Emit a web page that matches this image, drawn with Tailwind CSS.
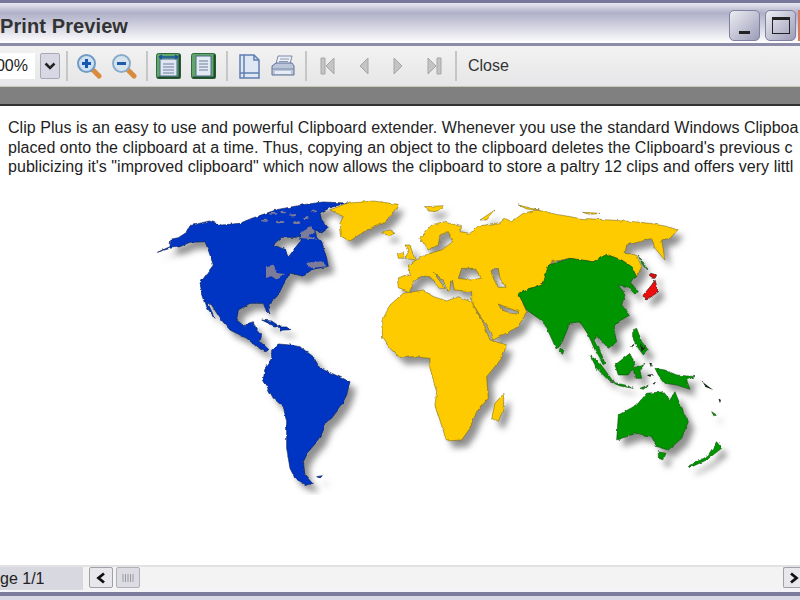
<!DOCTYPE html>
<html lang="en">

<head>
  <meta charset="UTF-8">
  <title>Print Preview</title>
  <script src="https://cdn.jsdelivr.net/npm/@tailwindcss/browser@4"></script>
</head>

<body class="w-[800px] h-[600px] overflow-hidden bg-white flex flex-col font-['Liberation_Sans',Arial,sans-serif] text-[#222]">

  <!-- title bar -->
  <div class="h-[46px] shrink-0 flex items-center justify-between border-t-[3px] border-b-[3px] border-t-[#77779a] border-b-[#8c8ca8] bg-gradient-to-b from-[#e8e8f0] via-[#b0b0c8] via-25% to-white">
    <h1 class="text-[20px] font-bold tracking-[0.1px] text-[#333] mt-[5px] whitespace-nowrap">Print Preview</h1>
    <div class="flex items-center gap-[5px] mt-[4px]">
      <div class="w-[31px] h-[31px] rounded-[5px] border border-[#8080a0] bg-gradient-to-br from-[#eeeef4] to-[#9c9cb8] flex items-end justify-center pb-[6px]">
        <div class="w-[11px] h-[3px] bg-[#222]"></div>
      </div>
      <div class="w-[31px] h-[31px] rounded-[5px] border border-[#8080a0] bg-gradient-to-br from-[#eeeef4] to-[#9c9cb8] flex items-center justify-center">
        <div class="w-[18px] h-[17px] border border-[#222] border-t-[3px]"></div>
      </div>
      <div class="w-[2px] h-[31px] bg-[#d8785c] -ml-[3px]"></div>
    </div>
  </div>

  <!-- toolbar -->
  <div class="h-[41px] shrink-0 flex items-center bg-gradient-to-b from-[#f2f2f2] to-[#e6e6e8] border-b border-[#c8c8b8]">
    <div class="w-[35px] h-[26px] bg-white flex items-center justify-end pr-[7px] overflow-hidden text-[16px]">
      <span class="whitespace-nowrap">00%</span>
    </div>
    <div class="ml-[5px] w-[20px] h-[26px] rounded-[2px] border border-[#a8a8b8] bg-[#d8d8e4] flex items-center justify-center">
      <svg width="12" height="8" viewBox="0 0 12 8"><path d="M1.500 1.500 6 6 10.500 1.500" fill="none" stroke="#222" stroke-width="2.500"/></svg>
    </div>
    <div class="ml-[6px] w-[2px] h-[30px] bg-[#c6c6c6]"></div>

    <svg class="ml-[8px]" width="26" height="26" viewBox="0 0 26 26">
      <path d="M16 16 23 23" stroke="#d98a3c" stroke-width="5" stroke-linecap="round"/>
      <circle cx="10.500" cy="10.500" r="8.500" fill="#cfe0f2" stroke="#6f9cc2" stroke-width="2"/>
      <path d="M6 10.500H15M10.500 6V15" stroke="#1458b0" stroke-width="3"/>
    </svg>
    <svg class="ml-[9px]" width="26" height="26" viewBox="0 0 26 26">
      <path d="M16 16 23 23" stroke="#d98a3c" stroke-width="5" stroke-linecap="round"/>
      <circle cx="10.500" cy="10.500" r="8.500" fill="#d6e4f0" stroke="#8aacc8" stroke-width="2"/>
      <path d="M6 10.500H15" stroke="#1c5ca8" stroke-width="3"/>
    </svg>
    <div class="ml-[9px] w-[2px] h-[30px] bg-[#c6c6c6]"></div>

    <svg class="ml-[8px]" width="25" height="26" viewBox="0 0 25 26">
      <rect x="0.500" y="0.500" width="24" height="25" rx="2" fill="#62a66c" stroke="#2f6a3c"/>
      <path d="M23.500 1.500V24.500H1.500" fill="none" stroke="#1f4a2a" stroke-width="2"/>
      <rect x="4" y="6" width="17" height="17" fill="#dfe6f2" stroke="#4a6a8c"/>
      <path d="M7 11H18M7 14H18M7 17H18M7 20H18" stroke="#6a7f9c"/>
      <path d="M3 4H22M3 4 6 2M3 4 6 6M22 4 19 2M22 4 19 6" fill="none" stroke="#1452a0" stroke-width="1.500"/>
    </svg>
    <svg class="ml-[10px]" width="25" height="26" viewBox="0 0 25 26">
      <rect x="0.500" y="0.500" width="24" height="25" rx="2" fill="#62a66c" stroke="#2f6a3c"/>
      <path d="M23.500 1.500V24.500H1.500" fill="none" stroke="#1f4a2a" stroke-width="2"/>
      <rect x="5" y="3" width="15" height="20" fill="#e4eaf4" stroke="#4a6a8c"/>
      <path d="M8 8H17M8 11H17M8 14H17M8 17H17" stroke="#6a7f9c"/>
    </svg>
    <div class="ml-[10px] w-[2px] h-[30px] bg-[#c6c6c6]"></div>

    <svg class="ml-[11px]" width="21" height="25" viewBox="0 0 21 25">
      <path d="M1 1H15L20 6V24H1Z" fill="#dfe6f4" stroke="#5f7fb0" stroke-width="1.500"/>
      <path d="M15 1V6H20M5 1V24M1 19H20" fill="none" stroke="#5f7fb0" stroke-width="1.500"/>
    </svg>
    <svg class="ml-[11px]" width="24" height="24" viewBox="0 0 24 24">
      <path d="M7 2H21L19 10H5Z" fill="#eef0f6" stroke="#7a8aa8"/>
      <path d="M9 5H18M8 7.500H17" stroke="#8a98b0"/>
      <path d="M1 12 5 9H21L23 12V21H1Z" fill="#bcc6da" stroke="#5f7096"/>
      <path d="M1 15H23" stroke="#7a8aa8"/>
      <rect x="4" y="17" width="16" height="3" fill="#e8ecf4"/>
    </svg>
    <div class="ml-[10px] w-[2px] h-[30px] bg-[#c6c6c6]"></div>

    <svg class="ml-[13px]" width="15" height="18" viewBox="0 0 15 18"><path d="M1 1H5V17H1ZM14 1V17L6 9Z" fill="#c4c4c4" stroke="#a6a6a6"/></svg>
    <svg class="ml-[23px]" width="11" height="18" viewBox="0 0 11 18"><path d="M10 1V17L2 9Z" fill="#c4c4c4" stroke="#a6a6a6"/></svg>
    <svg class="ml-[24px]" width="11" height="18" viewBox="0 0 11 18"><path d="M1 1V17L9 9Z" fill="#c4c4c4" stroke="#a6a6a6"/></svg>
    <svg class="ml-[23px]" width="15" height="18" viewBox="0 0 15 18"><path d="M10 1H14V17H10ZM1 1V17L9 9Z" fill="#c4c4c4" stroke="#a6a6a6"/></svg>
    <div class="ml-[13px] w-[2px] h-[30px] bg-[#c6c6c6]"></div>
    <span class="ml-[11px] text-[16px] text-[#333]">Close</span>
  </div>

  <!-- gray band over the page -->
  <div class="h-[19px] shrink-0 bg-[#808080] border-b-2 border-[#333]"></div>

  <!-- page -->
  <div class="flex-1 min-h-0 overflow-hidden">
    <div class="pl-[8px] pt-[12px] text-[16px] leading-[19.5px] tracking-[0.04px] whitespace-nowrap text-[#222]">
      <p>Clip Plus is an easy to use and powerful Clipboard extender. Whenever you use the standard Windows Clipboa</p>
      <p>placed onto the clipboard at a time. Thus, copying an object to the clipboard deletes the Clipboard's previous c</p>
      <p>publicizing it's "improved clipboard" which now allows the clipboard to store a paltry 12 clips and offers very littl</p>
    </div>

    <svg class="block ml-[150px] mt-[18.5px]" width="590" height="300" viewBox="150 195 590 300">
      <defs>
        <filter id="soft" x="-5%" y="-5%" width="110%" height="110%"><feGaussianBlur stdDeviation="3"/></filter>
        <!-- wobbles the straight polygon edges into a coastline -->
        <filter id="coast" x="-2%" y="-2%" width="104%" height="104%">
          <feTurbulence type="fractalNoise" baseFrequency="0.18" numOctaves="2" seed="4"/>
          <feDisplacementMap in="SourceGraphic" scale="3" xChannelSelector="R" yChannelSelector="G"/>
          <feGaussianBlur stdDeviation="0.350"/>
        </filter>
        <g id="west" transform="translate(150 195) scale(.3333)">
          <path fill-rule="evenodd" d="M22 172 60 155 62 133 85 128 110 112 120 92 178 78 215 90 270 85 300 72 340 58 380 44 460 29 520 21 590 24 540 38 510 54 515 74 535 99 515 114 495 104 500 125 515 139 530 189 535 214 485 224 460 244 420 234 400 269 385 300 360 325 355 340 360 358 350 350 340 325 300 325 265 345 260 375 285 395 295 385 310 380 318 400 335 420 330 440 355 462 345 470 320 455 290 430 240 405 210 370 185 330 172 322 195 370 172 340 155 290 150 265 175 230 190 210 175 165 165 140 120 142 90 155 60 160ZM370 149 395 127 445 127 455 134 435 159 415 187 405 164Z"/>
          <path d="M335 375 365 378 390 395 370 392ZM385 396 410 396 420 404 392 406ZM500 845 517 842 510 850Z"/>
          <path d="M365 465 385 447 420 450 450 455 490 485 510 520 545 535 600 560 590 600 575 630 545 670 530 680 510 730 475 770 460 800 465 840 490 868 465 868 435 850 420 820 410 760 410 680 400 635 370 610 340 555 345 520 365 490Z"/>
        </g>
        <g id="gold" transform="translate(150 195) scale(.3333)">
          <path d="M540 45 590 25 670 18 745 28 725 60 700 85 650 105 600 138 575 125 570 85 580 65Z"/>
          <path d="M695 112 720 105 735 115 715 122Z"/>
        </g>
        <g id="east-gold" transform="translate(380 195) scale(.3333)">
          <path fill-rule="evenodd" d="M52 250 90 237 85 210 125 185 150 175 185 165 205 150 220 140 205 110 180 120 175 150 145 165 120 130 155 90 190 80 245 95 240 110 270 115 295 93 360 83 375 70 395 80 430 55 470 45 540 60 600 70 690 75 760 80 810 85 865 95 893 105 870 130 845 135 855 195 825 160 815 130 780 140 740 150 735 175 770 180 785 215 770 245 755 215 725 195 680 180 640 200 570 190 515 200 490 265 415 295 440 350 415 395 340 435 320 390 290 345 275 320 275 290 225 285 218 262 212 258 210 285 200 285 190 255 160 232 195 280 178 280 150 245 125 243 105 258 88 290 55 278ZM235 250 245 220 285 220 305 250 270 255ZM333 227 355 220 360 250 378 277 355 277 340 250ZM355 327 375 335 415 350 418 358 395 355 365 345Z"/>
          <path d="M75 150 90 150 105 195 75 190 85 170ZM52 175 70 170 72 190 55 190ZM135 35 190 32 170 50 145 48ZM300 75 345 45 320 75ZM415 30 475 45 440 42ZM605 52 660 55 630 58Z"/>
          <path d="M8 430 5 380 30 330 70 295 130 285 160 305 200 318 235 305 275 322 310 385 330 435 380 450 365 490 320 545 325 610 290 650 270 700 245 735 200 738 165 630 170 590 150 520 150 490 100 485 60 488 30 460Z"/>
          <path d="M335 670 345 625 372 595 370 640 355 680Z"/>
        </g>
        <g id="east-green" transform="translate(380 195) scale(.3333)">
          <path d="M415 295 490 265 505 210 570 190 640 200 680 178 725 195 755 215 770 245 750 260 775 290 765 298 745 275 715 270 735 300 725 330 750 360 715 380 700 395 710 440 685 460 650 420 645 435 660 465 675 505 670 510 645 465 625 420 600 380 570 385 545 445 530 465 510 420 490 380 440 345Z"/>
          <path d="M540 460 552 465 548 478 538 470Z"/>
          <g transform="translate(630 375)">
            <path d="M0 105 30 130 70 185 55 180 20 145ZM60 185 105 195 130 205 90 198ZM75 135 120 100 135 135 115 165 85 165ZM130 145 165 130 150 150 155 175 135 175ZM128 30 140 25 155 65 175 90 160 105 145 85 128 50ZM195 145 225 150 260 165 315 170 290 180 300 208 260 195 225 190 205 165ZM150 205 175 195 160 208ZM365 275 380 285 372 288Z"/>
          </g>
          <path d="M710 735 715 660 770 630 800 595 850 590 870 615 885 590 905 640 925 680 905 730 865 765 830 755 815 725 770 715ZM835 770 858 775 850 795 835 790ZM925 815 985 780 1010 740 1025 760 980 795 930 818Z"/>
          <path d="M775 180 790 205 800 225 785 205Z"/>
        </g>
        <g id="japan" transform="translate(380 195) scale(.3333)">
          <path d="M790 300 815 270 825 255 835 290 800 315ZM812 235 830 240 825 250 812 248Z"/>
        </g>
      </defs>

      <!-- shadow of the land, shifted down and right -->
      <g fill="#909090" filter="url(#soft)" transform="translate(6 7)">
        <use href="#west"/><use href="#gold"/><use href="#east-gold"/><use href="#east-green"/><use href="#japan"/>
      </g>
      <g filter="url(#coast)" stroke-linejoin="round">
        <use href="#west" fill="#0434c4" stroke="#0c1c50" stroke-width="1.800"/>
        <use href="#gold" fill="#fdcb02" stroke="#6a5a10" stroke-width="1.500"/>
        <use href="#east-gold" fill="#fdcb02" stroke="#6a5a10" stroke-width="1.500"/>
        <use href="#east-green" fill="#059405" stroke="#0c3c0c" stroke-width="1.500"/>
        <use href="#japan" fill="#ee1111" stroke="#301010" stroke-width="2"/>

        <!-- arctic channels, great lakes and gulf of st lawrence -->
        <g transform="translate(150 195) scale(.3333) translate(270 9)" fill="#7c7c98">
          <ellipse cx="75" cy="68" rx="12" ry="3"/>
          <ellipse cx="100" cy="47" rx="12" ry="3"/>
          <ellipse cx="130" cy="42" rx="9" ry="4"/>
          <ellipse cx="158" cy="52" rx="10" ry="3"/>
          <ellipse cx="120" cy="72" rx="13" ry="4"/>
          <ellipse cx="170" cy="74" rx="11" ry="4"/>
          <ellipse cx="196" cy="60" rx="10" ry="3"/>
          <ellipse cx="222" cy="40" rx="9" ry="3"/>
          <path d="M180 105 215 85 225 100 205 115 235 125 180 120ZM78 205 100 200 110 225 135 228 110 245 95 235 78 240ZM195 195 245 190 260 205 215 210Z"/>
        </g>
        <!-- small dark islands in the pacific -->
        <g transform="translate(380 195) scale(.3333) translate(630 375)" fill="#1a2a1a">
          <path d="M120 80 135 70 125 88ZM150 70 165 85 155 95ZM178 128 186 130 183 142ZM170 165 195 162 180 170ZM188 188 198 186 192 194ZM330 180 350 195 370 210 345 200ZM385 235 393 240 390 250Z"/>
        </g>
      </g>
    </svg>
  </div>

  <!-- status and scroll bar -->
  <div class="h-[35px] shrink-0 flex flex-col">
    <div class="h-[25px] flex bg-[#f3f3f3] border-t-[2px] border-[#e2e2e2]">
      <div class="w-[83px] flex items-center bg-[#d8d8e0] text-[16px] whitespace-nowrap">ge 1/1</div>
      <div class="ml-[6px] w-[24px] h-[21px] rounded-[2px] border border-[#a0a0a8] bg-[#e8e8ec] flex items-center justify-center">
        <svg width="10" height="12" viewBox="0 0 10 12"><path d="M8 1.500 2.500 6 8 10.500" fill="none" stroke="#111" stroke-width="2.800"/></svg>
      </div>
      <div class="ml-[3px] w-[24px] h-[21px] rounded-[2px] border border-[#b0b0b8] bg-[#dcdce2] flex items-center justify-center">
        <svg width="12" height="8" viewBox="0 0 12 8"><path d="M1 0V8M3.500 0V8M6 0V8M8.500 0V8M11 0V8" stroke="#9a9aa4"/></svg>
      </div>
      <div class="flex-1"></div>
      <div class="w-[17px] h-[21px] rounded-l-[2px] border border-r-0 border-[#a0a0a8] bg-[#e8e8ec] flex items-center justify-end pr-[1px]">
        <svg width="10" height="12" viewBox="0 0 10 12"><path d="M2 1.500 7.500 6 2 10.500" fill="none" stroke="#111" stroke-width="2.800"/></svg>
      </div>
    </div>
    <div class="h-[2px] bg-[#f4f4f8]"></div>
    <div class="h-[4px] bg-[#7c7c9c]"></div>
    <div class="flex-1 bg-[#d8d8e4]"></div>
  </div>
</body>

</html>
